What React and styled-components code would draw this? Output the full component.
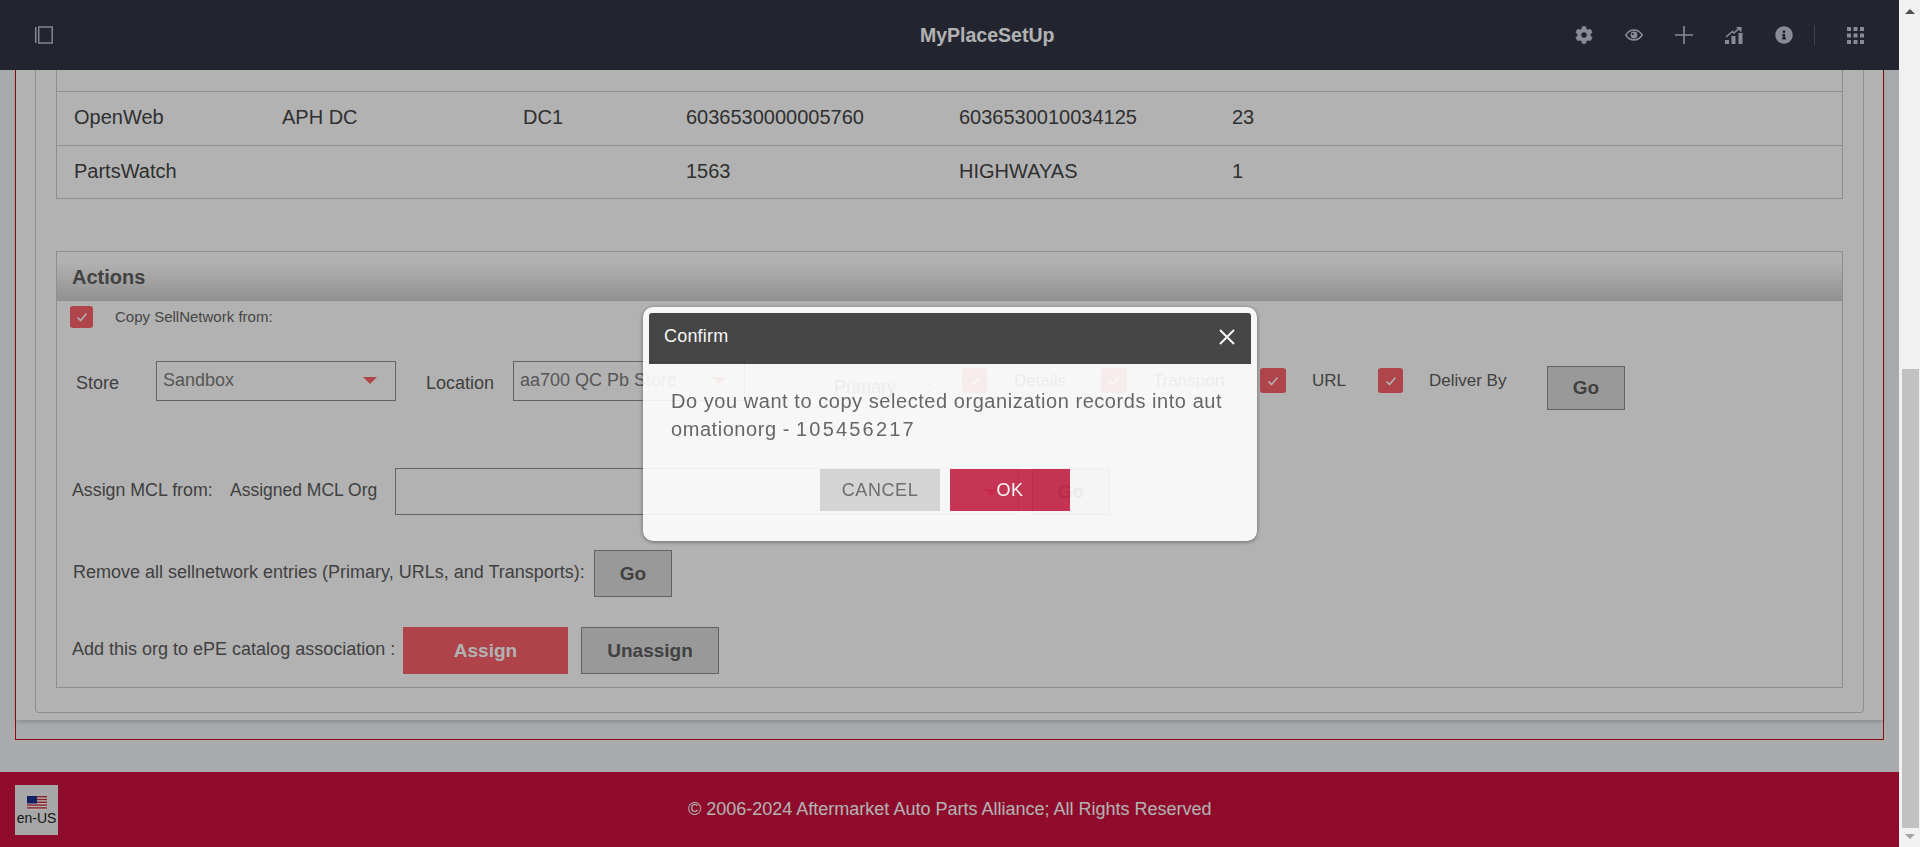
import React from "react";
import styled, { createGlobalStyle } from "styled-components";
import { FaCog, FaInfoCircle } from "react-icons/fa";

const Global = createGlobalStyle`
  html, body { margin: 0; height: 100%; overflow: hidden; }
  body { font-family: "Liberation Sans", Arial, sans-serif; color: #5c5c5c; }
  * { box-sizing: border-box; }
`;

const Shell = styled.div`display: flex; width: 1920px; height: 847px; overflow: hidden;`;
const Viewport = styled.div`position: relative; flex: 1; display: flex; flex-direction: column; min-width: 0;`;

const Header = styled.header`display: flex; align-items: center; height: 70px; background: #323444; padding-left: 35px; padding-right: 35px; flex: none;`;
const HeaderLeft = styled.div`width: 885px; display: flex; align-items: center;`;
const Title = styled.div`width: 134px; font-size: 19.5px; font-weight: 700; color: #fff; white-space: nowrap; text-align: center;`;
const HeaderRight = styled.div`margin-left: auto; display: flex; align-items: center; color: #c8c8d6;`;
const HeaderIcon = styled.span`width: 50px; height: 24px; display: flex; align-items: center; justify-content: center;`;
const HeaderSep = styled.span`width: 1px; height: 20px; background: #5b5d70; margin: 0 32px 0 5px;`;

const Content = styled.main`flex: 1; min-height: 0; overflow: hidden; background: #f1f4f7; padding: 0 15px 32px;`;
const Frame = styled.div`height: 100%; border: 1px solid #c81616; border-top: 0; padding: 0 0 19px;`;
const Sheet = styled.div`height: 100%; background: #fff; padding: 0 19px 7px; box-shadow: 0 2px 4px rgba(0,0,0,.18);`;
const Panel = styled.section`height: 100%; border: 1px solid #ccc; border-top: 0; border-radius: 0 0 4px 4px; padding: 0 20px 24px;`;

const DataTable = styled.div`border: 1px solid #ccc; border-top: 0; margin-bottom: 52px;`;
const Row = styled.div`
  display: grid; grid-template-columns: 208px 241px 163px 273px 273px 1fr;
  align-items: center; height: ${p => p.$h}px; padding: 0 0 2px 17px; font-size: 20px; color: #454545;
  border-bottom: ${p => p.$last ? "0" : "1px solid #ccc"};
`;

const ActionsBox = styled.section`border: 1px solid #ccc;`;
const ActionsHead = styled.h2`
  margin: 0; height: 49px; padding: 11px 0 0 15px; font-size: 20px; line-height: 28px; font-weight: 700; color: #5f5f5f;
  background: linear-gradient(#fff 0%, #fff 20%, #cfcfcf 100%);
`;
const ActionsBody = styled.div`padding-bottom: 13px;`;
const FlexRow = styled.div`display: flex; align-items: flex-start; height: ${p => p.$h}px; margin-top: ${p => p.$mt}px;`;
const CopyLabel = styled.span`margin-left: 22px; margin-top: 1px; font-size: 15px; line-height: 20px; color: #666;`;

const CheckBox = styled.span`
  flex: none; width: ${p => p.$w || 25}px; height: ${p => p.$hh || 25}px; margin-left: ${p => p.$ml || 0}px; margin-top: ${p => p.$mt || 0}px;
  border-radius: 3px; background: #fb636b; display: flex; align-items: center; justify-content: center;
`;
const Label = styled.span`
  flex: none; width: ${p => p.$w}px; margin-left: ${p => p.$ml || 0}px; margin-top: ${p => p.$mt || 0}px;
  font-size: ${p => p.$fs || 18}px; line-height: 24px; color: #5c5c5c; white-space: nowrap;
`;
const SelectBox = styled.div`
  position: relative; flex: none; width: ${p => p.$w}px; height: ${p => p.$hh || 40}px; border: 1px solid #8e8e8e; margin-left: ${p => p.$ml || 0}px;
  padding: 6px 0 0 6px; font-size: 18px; line-height: 24px; color: #7c7c7c; white-space: nowrap; overflow: hidden;
`;
const Caret = styled.i`
  position: absolute; right: ${p => p.$r}px; top: ${p => p.$t}px; width: 0; height: 0;
  border-left: 7px solid transparent; border-right: 7px solid transparent; border-top: 7px solid #fb636b;
`;
const OutlineBtn = styled.button`
  flex: none; width: ${p => p.$w}px; height: ${p => p.$hh || 47}px; margin-left: ${p => p.$ml || 0}px; margin-top: ${p => p.$mt || 0}px;
  background: #dbdbdb; border: 1px solid #8e8e8e; color: #5e5e5e; font: 700 19px "Liberation Sans", Arial, sans-serif; padding: 0;
`;
const PrimaryBtn = styled.button`
  flex: none; width: ${p => p.$w}px; height: 47px; margin-left: ${p => p.$ml || 0}px; border: 0; background: #f9616a; color: #fff;
  font: 700 19px "Liberation Sans", Arial, sans-serif; padding: 0;
`;

const Footer = styled.footer`flex: none; height: 75px; background: #cc113f; display: flex; align-items: flex-start; padding: 13px 0 0 15px; position: relative;`;
const LangBox = styled.div`width: 43px; height: 50px; background: #f0f0f0; display: flex; flex-direction: column; align-items: center; padding-top: 11px; color: #222; font-size: 14px; line-height: 16px;`;
const FooterText = styled.div`margin-left: 630px; margin-top: 14px; font-size: 18px; line-height: 20px; color: #fff; white-space: nowrap;`;

const Backdrop = styled.div`position: absolute; inset: 0; background: rgba(0,0,0,.3);`;
const Dialog = styled.div`
  position: absolute; left: 643px; top: 307px; width: 614px; height: 234px; background: #fff; opacity: .9;
  border-radius: 10px; padding: 6px 6px; box-shadow: 0 1px 4px rgba(0,0,0,.45);
`;
const DialogHead = styled.div`
  height: 51px; background: #3a3a3a; color: #fff; border-radius: 3px 3px 0 0; padding: 0 15px 4px 15px; display: flex; align-items: center; justify-content: space-between;
  font-size: 18px; letter-spacing: .2px;
`;
const DialogBody = styled.p`margin: 23px 0 0 22px; width: 556px; font-size: 20px; letter-spacing: .55px; line-height: 28px; color: #5e5e5e; word-break: break-all;`;
const RecordId = styled.span`letter-spacing: 2.2px;`;
const DialogActions = styled.div`display: flex; gap: 10px; margin: 26px 0 0 171px;`;
const DialogBtn = styled.button`
  width: 120px; height: 42px; border: 0; padding: 0; font: 18px "Liberation Sans", Arial, sans-serif; letter-spacing: .6px;
  background: ${p => p.$ok ? "#c9284a" : "#d9d9d9"}; color: ${p => p.$ok ? "#fff" : "#666"};
`;

const ScrollTrack = styled.aside`flex: none; width: 21px; background: #f1f1f1; display: flex; flex-direction: column; align-items: center; padding: 9px 0 8px 1px;`;
const ArrowUp = styled.i`width: 0; height: 0; border-left: 5px solid transparent; border-right: 5px solid transparent; border-bottom: 5px solid #505050;`;
const ArrowDown = styled.i`width: 0; height: 0; border-left: 5px solid transparent; border-right: 5px solid transparent; border-top: 5px solid #a3a3a3;`;
const Thumb = styled.div`width: 17px; height: 459px; background: #c1c1c1; margin-top: auto; margin-bottom: 6px;`;

const Tick = () => (
  <svg width="14" height="14" viewBox="0 0 14 14" fill="none" stroke="#fff" strokeWidth="1.6"><path d="M2.5 7.5 5.5 10.5 11.5 3.5" /></svg>
);
const Check = (p) => <CheckBox {...p}><Tick /></CheckBox>;

const rows = [
  ["OpenWeb", "APH DC", "DC1", "6036530000005760", "6036530010034125", "23"],
  ["PartsWatch", "", "", "1563", "HIGHWAYAS", "1"],
];

export default function App() {
  return (
    <Shell>
      <Global />
      <Viewport>
        <Header>
          <HeaderLeft>
            <svg width="18" height="18" viewBox="0 0 18 18" fill="none" stroke="#c8c8d6" strokeWidth="1.4">
              <path d="M.7 1v16" /><rect x="3.7" y="1" width="13.5" height="16" />
            </svg>
          </HeaderLeft>
          <Title>MyPlaceSetUp</Title>
          <HeaderRight>
            <HeaderIcon><FaCog size={18} /></HeaderIcon>
            <HeaderIcon>
              <svg width="18" height="12" viewBox="0 0 18 12" fill="none">
                <path d="M.8 6C3 2.600 5.800 1 9 1s6 1.600 8.200 5C15 9.400 12.200 11 9 11S3 9.400.8 6Z" stroke="currentColor" strokeWidth="1.5" />
                <circle cx="9" cy="6" r="3.400" fill="currentColor" /><circle cx="7.800" cy="5" r="1" fill="#323444" />
              </svg>
            </HeaderIcon>
            <HeaderIcon>
              <svg width="18" height="18" viewBox="0 0 18 18" stroke="currentColor" strokeWidth="1.6"><path d="M9 0v18M0 9h18" /></svg>
            </HeaderIcon>
            <HeaderIcon>
              <svg width="18" height="18" viewBox="0 0 18 18" fill="currentColor">
                <rect x="0" y="14" width="4" height="4" /><rect x="6.500" y="10" width="4" height="8" /><rect x="13.500" y="7" width="4" height="11" />
                <path d="M1 11 7.500 5.500 9 7l5-4.500" fill="none" stroke="currentColor" strokeWidth="1.6" /><path d="M11 1h5.500v5.500z" />
              </svg>
            </HeaderIcon>
            <HeaderIcon><FaInfoCircle size={18} /></HeaderIcon>
            <HeaderSep />
            <svg width="17" height="17" viewBox="0 0 17 17" fill="currentColor">
              {[0, 6.500, 13].flatMap(y => [0, 6.500, 13].map(x => <rect key={`${x}-${y}`} x={x} y={y} width="4" height="4" />))}
            </svg>
          </HeaderRight>
        </Header>

        <Content>
          <Frame>
            <Sheet>
              <Panel>
                <DataTable>
                  <Row $h={22} />
                  {rows.map((r, i) => (
                    <Row key={r[0]} $h={i === 0 ? 54 : 52} $last={i === 1}>
                      {r.map((c, j) => <span key={j}>{c}</span>)}
                    </Row>
                  ))}
                </DataTable>

                <ActionsBox>
                  <ActionsHead>Actions</ActionsHead>
                  <ActionsBody>
                    <FlexRow $h={22} $mt={5}>
                      <Check $ml={13} $w={23} $hh={22} />
                      <CopyLabel>Copy SellNetwork from:</CopyLabel>
                    </FlexRow>
                    <FlexRow $h={49} $mt={33}>
                      <Label $ml={19} $w={80} $mt={10}>Store</Label>
                      <SelectBox $w={240}>Sandbox<Caret $r={18} $t={15} /></SelectBox>
                      <Label $ml={30} $w={87} $mt={10}>Location</Label>
                      <SelectBox $w={232}>aa700 QC Pb Store<Caret $r={18} $t={15} /></SelectBox>
                      <Label $ml={89} $w={92} $mt={14}>Primary</Label>
                      <Label $w={36} $mt={14}>:</Label>
                      <Check $mt={7} />
                      <Label $ml={27} $w={87} $mt={8} $fs={17}>Details</Label>
                      <Check $mt={7} $w={26} />
                      <Label $ml={26} $w={107} $mt={8} $fs={17}>Transport</Label>
                      <Check $mt={7} $w={26} />
                      <Label $ml={26} $w={66} $mt={8} $fs={17}>URL</Label>
                      <Check $mt={7} />
                      <Label $ml={26} $w={118} $mt={8} $fs={17}>Deliver By</Label>
                      <OutlineBtn $w={78} $hh={44} $mt={5}>Go</OutlineBtn>
                    </FlexRow>
                    <FlexRow $h={47} $mt={58}>
                      <Label $ml={15} $w={158} $mt={10} $fs={17.8}>Assign MCL from:</Label>
                      <Label $w={165} $mt={10} $fs={17.5}>Assigned MCL Org</Label>
                      <SelectBox $w={624} $hh={47}><Caret $r={20} $t={20} /></SelectBox>
                      <OutlineBtn $w={78} $ml={13}>Go</OutlineBtn>
                    </FlexRow>
                    <FlexRow $h={47} $mt={35}>
                      <Label $ml={16} $w={521} $mt={10}>Remove all sellnetwork entries (Primary, URLs, and Transports):</Label>
                      <OutlineBtn $w={78}>Go</OutlineBtn>
                    </FlexRow>
                    <FlexRow $h={47} $mt={30}>
                      <Label $ml={15} $w={331} $mt={10}>Add this org to ePE catalog association :</Label>
                      <PrimaryBtn $w={165}>Assign</PrimaryBtn>
                      <OutlineBtn $w={138} $ml={13}>Unassign</OutlineBtn>
                    </FlexRow>
                  </ActionsBody>
                </ActionsBox>
              </Panel>
            </Sheet>
          </Frame>
        </Content>

        <Footer>
          <LangBox>
            <svg width="20" height="14" viewBox="0 0 20 14">
              <rect width="20" height="14" fill="#fff" />
              {[0, 2.800, 5.600, 8.400, 11.200].map(y => <rect key={y} y={y} width="20" height="1.400" fill="#c8313e" />)}
              <rect width="10" height="7.500" fill="#1a2f8c" />
            </svg>
            <span>en-US</span>
          </LangBox>
          <FooterText>© 2006-2024 Aftermarket Auto Parts Alliance; All Rights Reserved</FooterText>
        </Footer>

        <Backdrop />
        <Dialog>
          <DialogHead>
            Confirm
            <svg width="18" height="18" viewBox="0 0 18 18" stroke="#fff" strokeWidth="2"><path d="M2 2l14 14M16 2 2 16" /></svg>
          </DialogHead>
          <DialogBody>Do you want to copy selected organization records into automationorg - <RecordId>105456217</RecordId></DialogBody>
          <DialogActions>
            <DialogBtn>CANCEL</DialogBtn>
            <DialogBtn $ok>OK</DialogBtn>
          </DialogActions>
        </Dialog>
      </Viewport>
      <ScrollTrack>
        <ArrowUp />
        <Thumb />
        <ArrowDown />
      </ScrollTrack>
    </Shell>
  );
}
